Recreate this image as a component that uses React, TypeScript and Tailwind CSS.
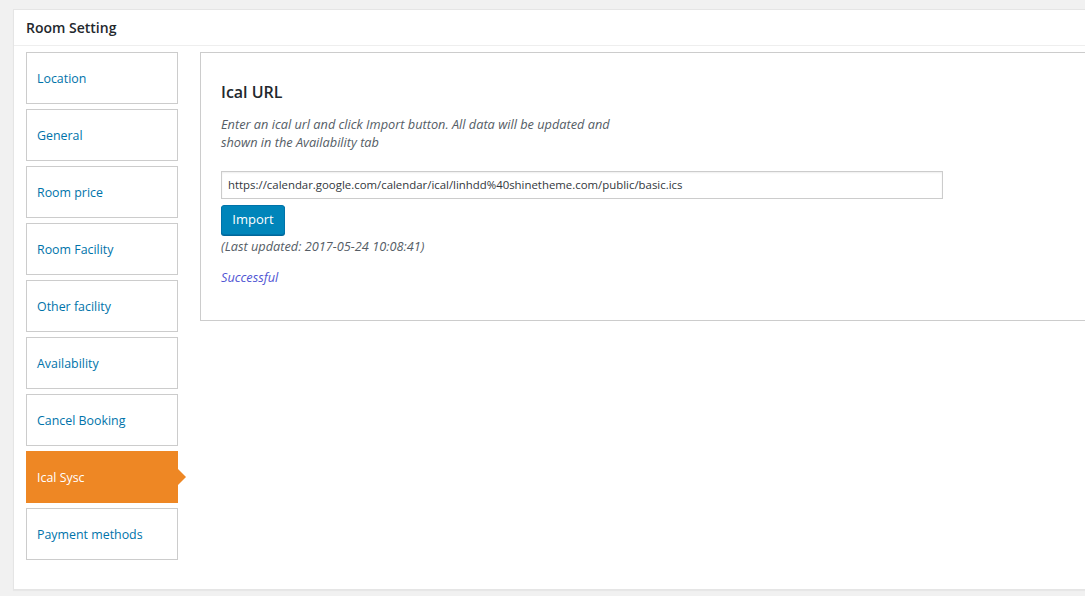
import React from "react";

const tabs = [
  "Location",
  "General",
  "Room price",
  "Room Facility",
  "Other facility",
  "Availability",
  "Cancel Booking",
  "Ical Sysc",
  "Payment methods",
];

export default function App() {
  return (
    <div
      className="w-[1085px] h-[596px] overflow-hidden bg-[#f1f1f1] pt-[9px] pl-[13px]"
      style={{ fontFamily: '"Open Sans", "Noto Sans", sans-serif' }}
    >
      <div className="w-[1100px] h-[581px] bg-white border border-[#e5e5e5] shadow-[0_1px_1px_rgba(0,0,0,0.04)]">
        <div className="h-[36px] flex items-center pl-[12px] border-b border-[#eeeeee]">
          <span className="text-[14px] font-semibold text-[#23282d]">Room Setting</span>
        </div>
        <div className="flex pt-[6px] pl-[12px] gap-[22px]">
          <div className="flex flex-col gap-[5px] w-[152px] shrink-0">
            {tabs.map((t) =>
              t === "Ical Sysc" ? (
                <div
                  key={t}
                  className="relative h-[52px] bg-[#ee8724] flex items-center pl-[11px] pt-[2px] text-[12.4px] text-white"
                >
                  {t}
                  <div className="absolute right-[-8px] top-[18px] w-0 h-0 border-t-[8px] border-b-[8px] border-l-[8px] border-t-transparent border-b-transparent border-l-[#ee8724]" />
                </div>
              ) : (
                <div
                  key={t}
                  className="h-[52px] border border-[#cccccc] bg-white flex items-center pl-[10px] pt-[2px] text-[12.4px] text-[#0073aa]"
                >
                  {t}
                </div>
              )
            )}
          </div>
          <div className="flex-1 self-start h-[269px] border border-[#cccccc] bg-white pl-[20px] pt-[28px]">
            <h2 className="text-[16px] font-semibold text-[#23282d] leading-[22px]">Ical URL</h2>
            <p className="mt-[12px] text-[12.75px] italic text-[#555d66] leading-[18px]">
              Enter an ical url and click Import button. All data will be updated and
              <br />
              shown in the Availability tab
            </p>
            <div className="mt-[20px] w-[722px] h-[28px] border border-[#cccccc] flex items-center pl-[6px] text-[11.4px] text-[#32373c] shadow-[inset_0_1px_2px_rgba(0,0,0,0.07)]">
              https://calendar.google.com/calendar/ical/linhdd%40shinetheme.com/public/basic.ics
            </div>
            <div className="mt-[6px] w-[64px] h-[30px] rounded-[3px] bg-[#0085ba] border border-[#0073aa] shadow-[0_1px_0_#006799] flex items-center justify-center text-[13px] text-white">
              Import
            </div>
            <p className="mt-[2px] text-[12.75px] italic text-[#555d66] leading-[18px]">
              (Last updated: 2017-05-24 10:08:41)
            </p>
            <p className="mt-[13px] text-[12.75px] italic text-[#4f55d3] leading-[18px]">Successful</p>
          </div>
        </div>
      </div>
    </div>
  );
}
